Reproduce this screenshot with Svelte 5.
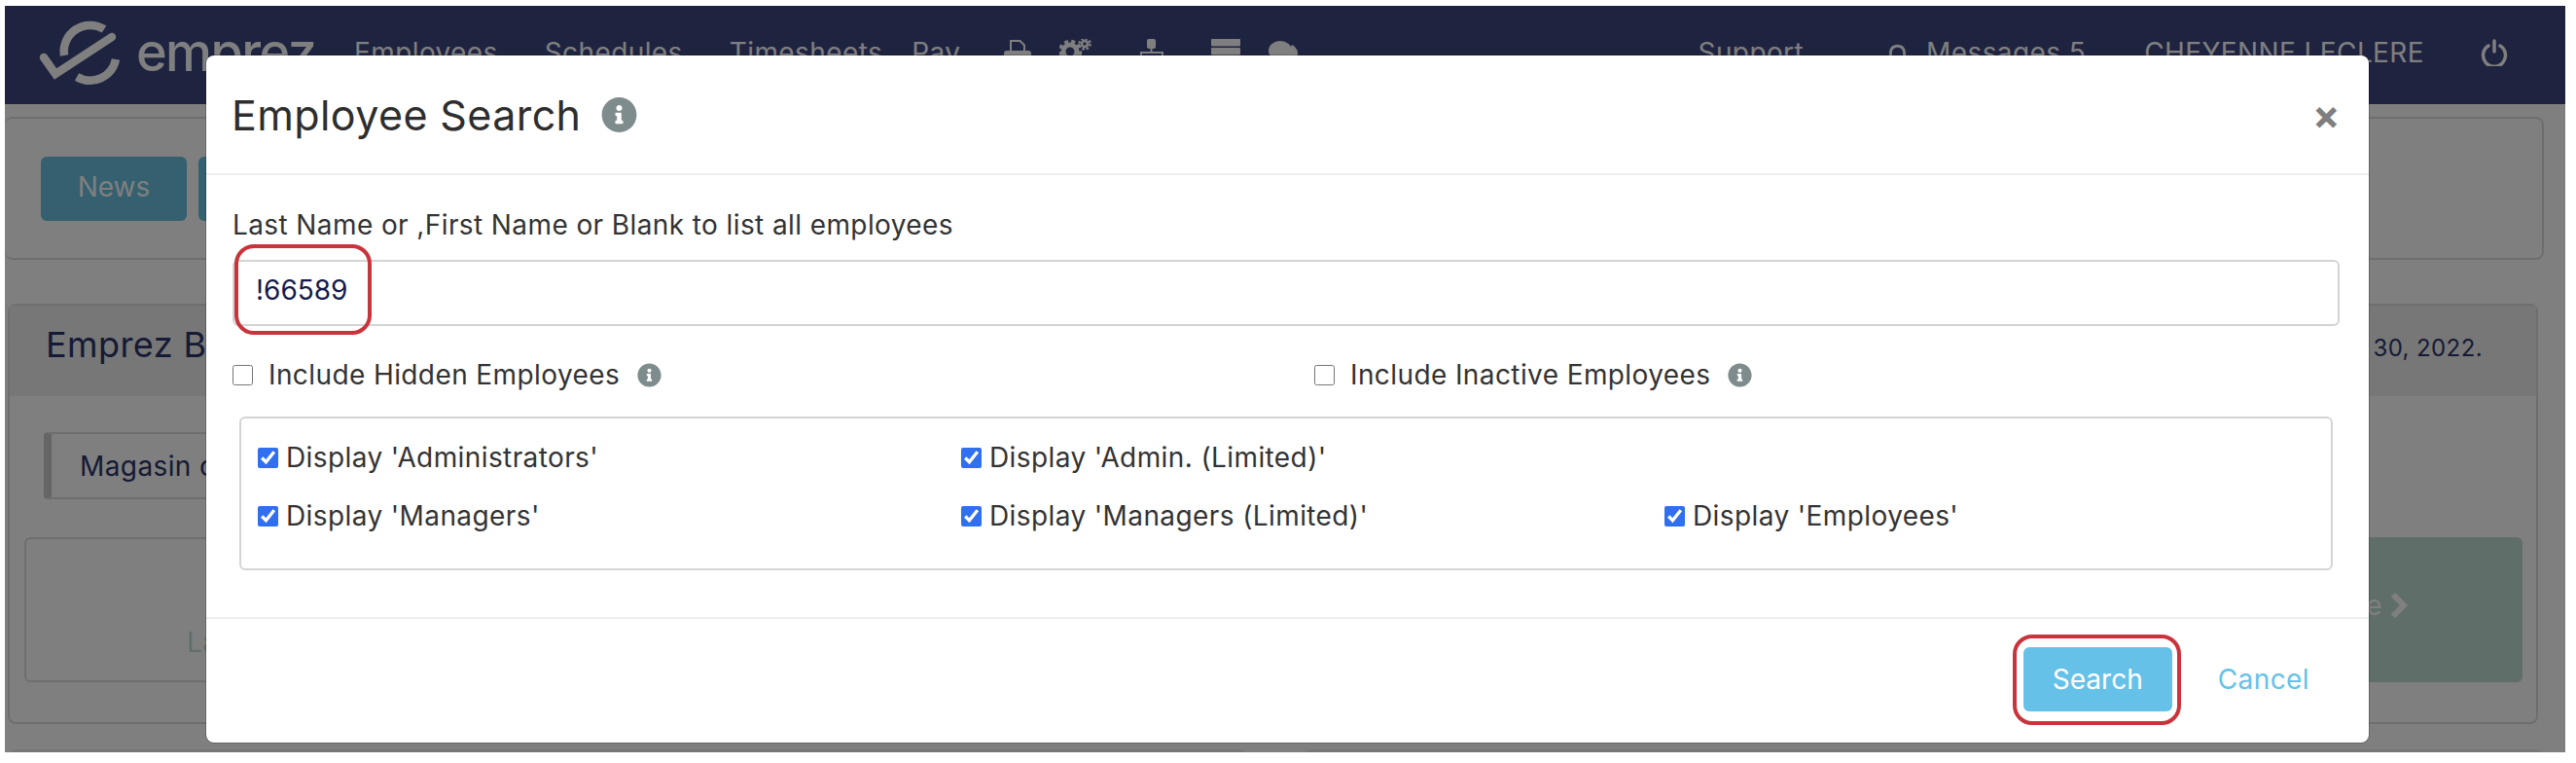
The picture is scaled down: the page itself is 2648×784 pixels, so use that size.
<script>
  const navLinks = ["Employees", "Schedules", "Timesheets"];
  const displayOptions = [
    "Display 'Administrators'",
    "Display 'Admin. (Limited)'",
    null,
    "Display 'Managers'",
    "Display 'Managers (Limited)'",
    "Display 'Employees'",
  ];
  const infoPath =
    "M256 8C119.043 8 8 119.083 8 256c0 136.997 111.043 248 248 248s248-111.003 248-248C504 119.083 392.957 8 256 8zm0 110c23.196 0 42 18.804 42 42s-18.804 42-42 42-42-18.804-42-42 18.804-42 42-42zm56 254c0 6.627-5.373 12-12 12h-88c-6.627 0-12-5.373-12-12v-24c0-6.627 5.373-12 12-12h12v-64h-12c-6.627 0-12-5.373-12-12v-24c0-6.627 5.373-12 12-12h64c6.627 0 12 5.373 12 12v100h12c6.627 0 12 5.373 12 12v24z";
</script>

<div class="shell">
  <header class="navbar">
    <div class="logo">
      <svg width="88" height="68" viewBox="38 20 88 68" fill="none" stroke="#fff" stroke-width="8.5" stroke-linecap="round">
        <path d="M45 59 L57 76 L115 38" />
        <path d="M66 57 A27 27 0 0 1 107 30" stroke-linecap="butt" />
        <path d="M79 79 A27 27 0 0 0 119 61" stroke-linecap="butt" />
        <path d="M112 63 L122 50 L130 63 Z" fill="#fff" stroke="none" />
      </svg>
      <span class="wordmark">emprez</span>
    </div>
    <nav class="links">
      {#each navLinks as link}
        <span>{link}</span>
      {/each}
    </nav>
    <span class="pay">Pay</span>
    <div class="nav-icons">
      <svg width="28" height="28" viewBox="0 0 28 28" fill="#fff">
        <path d="M6 12V1h11l5 5v6h-2V7l-4-4H8v9z" />
        <rect x="0" y="12" width="28" height="14" rx="3" />
      </svg>
      <svg width="34" height="30" viewBox="0 0 34 30" fill="none" stroke="#fff">
        <circle cx="11" cy="13" r="7" stroke-width="5" />
        <circle cx="11" cy="13" r="10.5" stroke-width="3.5" stroke-dasharray="4 3.2" />
        <circle cx="26" cy="5" r="3" stroke-width="2.5" />
        <circle cx="26" cy="5" r="5.5" stroke-width="2.5" stroke-dasharray="2.5 1.8" />
      </svg>
      <svg width="24" height="28" viewBox="0 0 24 28" fill="#fff">
        <rect x="7" y="0" width="9" height="10" rx="2" />
        <rect x="10.5" y="9" width="2" height="5" />
        <path d="M0 24V13h24v11h-2v-9H2v9z" />
      </svg>
      <svg width="30" height="18" viewBox="0 0 30 18" fill="#fff">
        <rect width="30" height="7.5" rx="1" />
        <rect y="9" width="30" height="7.5" rx="1" />
      </svg>
      <svg width="30" height="28" viewBox="0 0 30 28" fill="#fff">
        <path d="M24 6c4 2 6 6 6 9s-2 6-4 8l-8-3z" />
        <ellipse cx="12" cy="12" rx="12" ry="10" />
      </svg>
    </div>
    <div class="nav-right">
      <span class="support">Support</span>
      <span class="messages">
        <svg class="bell" width="27" height="30" viewBox="0 0 448 512" fill="#fff">
          <path d="M224 48c-88 0-144 60-144 144 0 90-30 120-62 156-13 15-3 36 14 36h384c17 0 27-21 14-36-32-36-62-66-62-156 0-84-56-144-144-144zm0 48c60 0 96 40 96 96 0 80 22 118 42 144H86c20-26 42-64 42-144 0-56 36-96 96-96z" />
        </svg>
        Messages 5
      </span>
      <span class="user">CHEYENNE LECLERE</span>
      <svg class="power" width="28" height="28" viewBox="0 0 28 28" fill="none" stroke="#fff" stroke-width="3.5" stroke-linecap="round">
        <path d="M8 7 A11.5 11.5 0 1 0 20 7" />
        <path d="M14 2V13" />
      </svg>
    </div>
  </header>

  <section class="news-panel">
    <button class="pill" type="button">News</button>
    <button class="pill" type="button"></button>
  </section>

  <section class="bulletin">
    <div class="bulletin-head">
      <span class="bulletin-title">Emprez B</span>
      <span class="bulletin-date">r 30, 2022.</span>
    </div>
    <div class="bulletin-body">
      <div class="tab">Magasin d</div>
      <div class="boxes">
        <div class="box-left">La</div>
        <div class="box-right">
          e
          <svg width="18" height="26" viewBox="0 0 18 26" fill="none" stroke="#fff" stroke-width="6">
            <path d="M3 2 L14 13 L3 24" />
          </svg>
        </div>
      </div>
    </div>
  </section>

  <div class="lower">
    <div class="lower-card"></div>
    <div class="lower-card"></div>
  </div>

  <div class="backdrop"></div>

  <div class="modal">
    <div class="modal-header">
      <h2>Employee Search</h2>
      <svg class="title-info" width="37" height="38" viewBox="0 0 512 512"><path d={infoPath} /></svg>
      <span class="close">×</span>
    </div>

    <div class="modal-body">
      <label class="name-label" for="name">Last Name or ,First Name or Blank to list all employees</label>
      <div class="input-wrap">
        <input id="name" type="text" value="!66589" />
        <span class="ring ring-input"></span>
      </div>

      <div class="includes">
        <label class="include">
          <input type="checkbox" />
          Include Hidden Employees
          <svg width="25" height="25" viewBox="0 0 512 512"><path d={infoPath} /></svg>
        </label>
        <label class="include">
          <input type="checkbox" />
          Include Inactive Employees
          <svg width="25" height="25" viewBox="0 0 512 512"><path d={infoPath} /></svg>
        </label>
      </div>

      <div class="options">
        {#each displayOptions as option}
          {#if option}
            <label class="option"><input type="checkbox" checked /> {option}</label>
          {:else}
            <span></span>
          {/if}
        {/each}
      </div>
    </div>

    <div class="modal-footer">
      <div class="search-wrap">
        <button class="search" type="button">Search</button>
        <span class="ring ring-search"></span>
      </div>
      <span class="cancel">Cancel</span>
    </div>
  </div>
</div>

<style>
  :global(body) {
    background: #fff;
  }

  .shell {
    position: relative;
    width: 2632px;
    height: 767px;
    margin: 6px 0 0 5px;
    overflow: hidden;
    background: #fff;
    font-family: "Inter", "Noto Sans", sans-serif;
    font-size: 28px;
    letter-spacing: 0.4px;
    color: #333;
  }

  .navbar {
    display: flex;
    align-items: center;
    height: 101px;
    padding-bottom: 6px;
    box-sizing: border-box;
    background: #3c4681;
    color: #fff;
  }

  .logo {
    display: flex;
    align-items: center;
    margin-left: 33px;
    width: 326px;
  }

  .wordmark {
    margin-left: 14px;
    font-size: 54px;
    font-weight: 500;
    letter-spacing: -1.6px;
  }

  .links {
    display: flex;
    gap: 48px;
  }

  .pay {
    margin-left: 30px;
  }

  .nav-icons {
    display: flex;
    align-items: flex-start;
    height: 30px;
    margin-left: 45px;
    margin-top: 2px;
  }

  .nav-icons svg:nth-child(2) {
    margin-left: 29px;
  }
  .nav-icons svg:nth-child(3) {
    margin-left: 49px;
  }
  .nav-icons svg:nth-child(4) {
    margin-left: 49px;
  }
  .nav-icons svg:nth-child(5) {
    margin-left: 29px;
  }

  .nav-right {
    display: flex;
    align-items: center;
    margin-left: auto;
    padding-right: 59px;
  }

  .messages {
    display: flex;
    align-items: center;
    gap: 16px;
    margin-left: 83px;
  }

  .bell {
    margin-top: 8px;
  }

  .user {
    margin-left: 60px;
  }

  .power {
    margin-left: 58px;
  }

  .news-panel {
    display: flex;
    gap: 12px;
    height: 147px;
    margin: 13px 22px 0 0;
    padding: 39px 37px 0;
    box-sizing: border-box;
    border: 2px solid #ddd;
    border-left: 0;
    border-radius: 8px;
  }

  .pill {
    width: 150px;
    height: 66px;
    padding-bottom: 6px;
    border: 0;
    border-radius: 6px;
    background: #68c0de;
    color: #fff;
    font: inherit;
  }

  .bulletin {
    margin: 45px 28px 0 3px;
    height: 432px;
    box-sizing: border-box;
    border: 2px solid #ddd;
    border-radius: 8px;
  }

  .bulletin-head {
    display: flex;
    align-items: center;
    justify-content: space-between;
    height: 93px;
    padding: 0 55px 0 37px;
    box-sizing: border-box;
    background: #eee;
    color: #2a346a;
  }

  .bulletin-title {
    margin-bottom: 14px;
    font-size: 36px;
  }

  .bulletin-date {
    margin-bottom: 6px;
    font-size: 24px;
  }

  .bulletin-body {
    padding: 37px 14px 0 15px;
  }

  .tab {
    display: flex;
    align-items: center;
    width: 500px;
    height: 69px;
    margin-left: 20px;
    padding-left: 29px;
    box-sizing: border-box;
    border: 2px solid #ddd;
    border-left: 8px solid #ccc;
    border-radius: 4px;
    color: #2a346a;
  }

  .boxes {
    display: flex;
    gap: 12px;
    height: 149px;
    margin-top: 39px;
  }

  .box-left {
    flex: 1;
    padding: 89px 0 0 165px;
    box-sizing: border-box;
    border: 2px solid #ddd;
    border-radius: 6px;
    color: #bedcd0;
  }

  .box-right {
    display: flex;
    align-items: center;
    justify-content: flex-end;
    gap: 8px;
    width: 400px;
    padding: 0 118px 10px 0;
    box-sizing: border-box;
    border-radius: 6px;
    background: #bedcd0;
    color: #fff;
  }

  .lower {
    display: flex;
    gap: 57px;
    margin: 26px 22px 0 3px;
  }

  .lower-card {
    flex: 1;
    height: 40px;
    border-radius: 8px;
    background: #eee;
  }

  .backdrop {
    position: absolute;
    inset: 0;
    background: rgba(0, 0, 0, 0.5);
  }

  .modal {
    position: absolute;
    top: 51px;
    left: 207px;
    display: flex;
    flex-direction: column;
    width: 2223px;
    height: 706px;
    border-radius: 8px;
    background: #fff;
    box-shadow: 0 0 0 1px rgba(0, 0, 0, 0.2);
  }

  .modal-header {
    display: flex;
    align-items: center;
    height: 123px;
    padding: 0 29px 0 26px;
    box-sizing: border-box;
    border-bottom: 2px solid #eee;
  }

  h2 {
    margin: 0;
    font-size: 43px;
    font-weight: 400;
    color: #2e2e2e;
  }

  .title-info {
    margin-left: 21px;
  }

  svg path {
    fill: inherit;
  }

  .modal svg {
    fill: #7f8c8d;
  }

  .close {
    margin-left: auto;
    font-size: 42px;
    font-weight: 700;
    line-height: 1;
    color: #7f7f7f;
  }

  .modal-body {
    flex: 1;
    padding: 31px 30px 0 27px;
    box-sizing: border-box;
  }

  .name-label {
    display: block;
    height: 40px;
    margin-bottom: 16px;
    line-height: 40px;
  }

  .input-wrap {
    position: relative;
  }

  #name {
    display: block;
    width: 100%;
    height: 68px;
    padding: 0 22px 6px;
    box-sizing: border-box;
    border: 2px solid #d4d4d4;
    border-radius: 6px;
    outline: 0;
    font: inherit;
    color: #141a4e;
  }

  .ring {
    position: absolute;
    border: 4px solid #c9343c;
    border-radius: 20px;
    box-sizing: border-box;
    pointer-events: none;
  }

  .ring-input {
    top: -16px;
    left: 2px;
    width: 141px;
    height: 93px;
  }

  .includes {
    display: grid;
    grid-template-columns: 1112px 1fr;
    margin-top: 30px;
  }

  .include {
    display: flex;
    align-items: center;
    gap: 16px;
    height: 40px;
  }

  .include input {
    width: 21px;
    height: 21px;
    margin: 0;
  }

  .include svg {
    margin-left: 2px;
  }

  .options {
    display: grid;
    grid-template-columns: repeat(3, 723px);
    grid-auto-rows: 60px;
    height: 158px;
    margin: 23px 7px 0;
    padding: 10px 0 0 17px;
    box-sizing: border-box;
    border: 2px solid #d4d4d4;
    border-radius: 6px;
  }

  .option {
    display: flex;
    align-items: center;
    gap: 8px;
  }

  .option input {
    width: 21px;
    height: 21px;
    margin: 0;
    accent-color: #2f6ff0;
  }

  .modal-footer {
    display: flex;
    align-items: center;
    justify-content: flex-end;
    gap: 47px;
    height: 129px;
    padding: 0 61px 3px 0;
    box-sizing: border-box;
    border-top: 2px solid #eee;
  }

  .search-wrap {
    position: relative;
  }

  .search {
    display: block;
    width: 153px;
    height: 66px;
    border: 0;
    border-radius: 6px;
    background: #66c1e8;
    color: #fff;
    font: inherit;
  }

  .ring-search {
    top: -13px;
    left: -11px;
    width: 173px;
    height: 93px;
  }

  .cancel {
    color: #66c1e8;
  }
</style>
